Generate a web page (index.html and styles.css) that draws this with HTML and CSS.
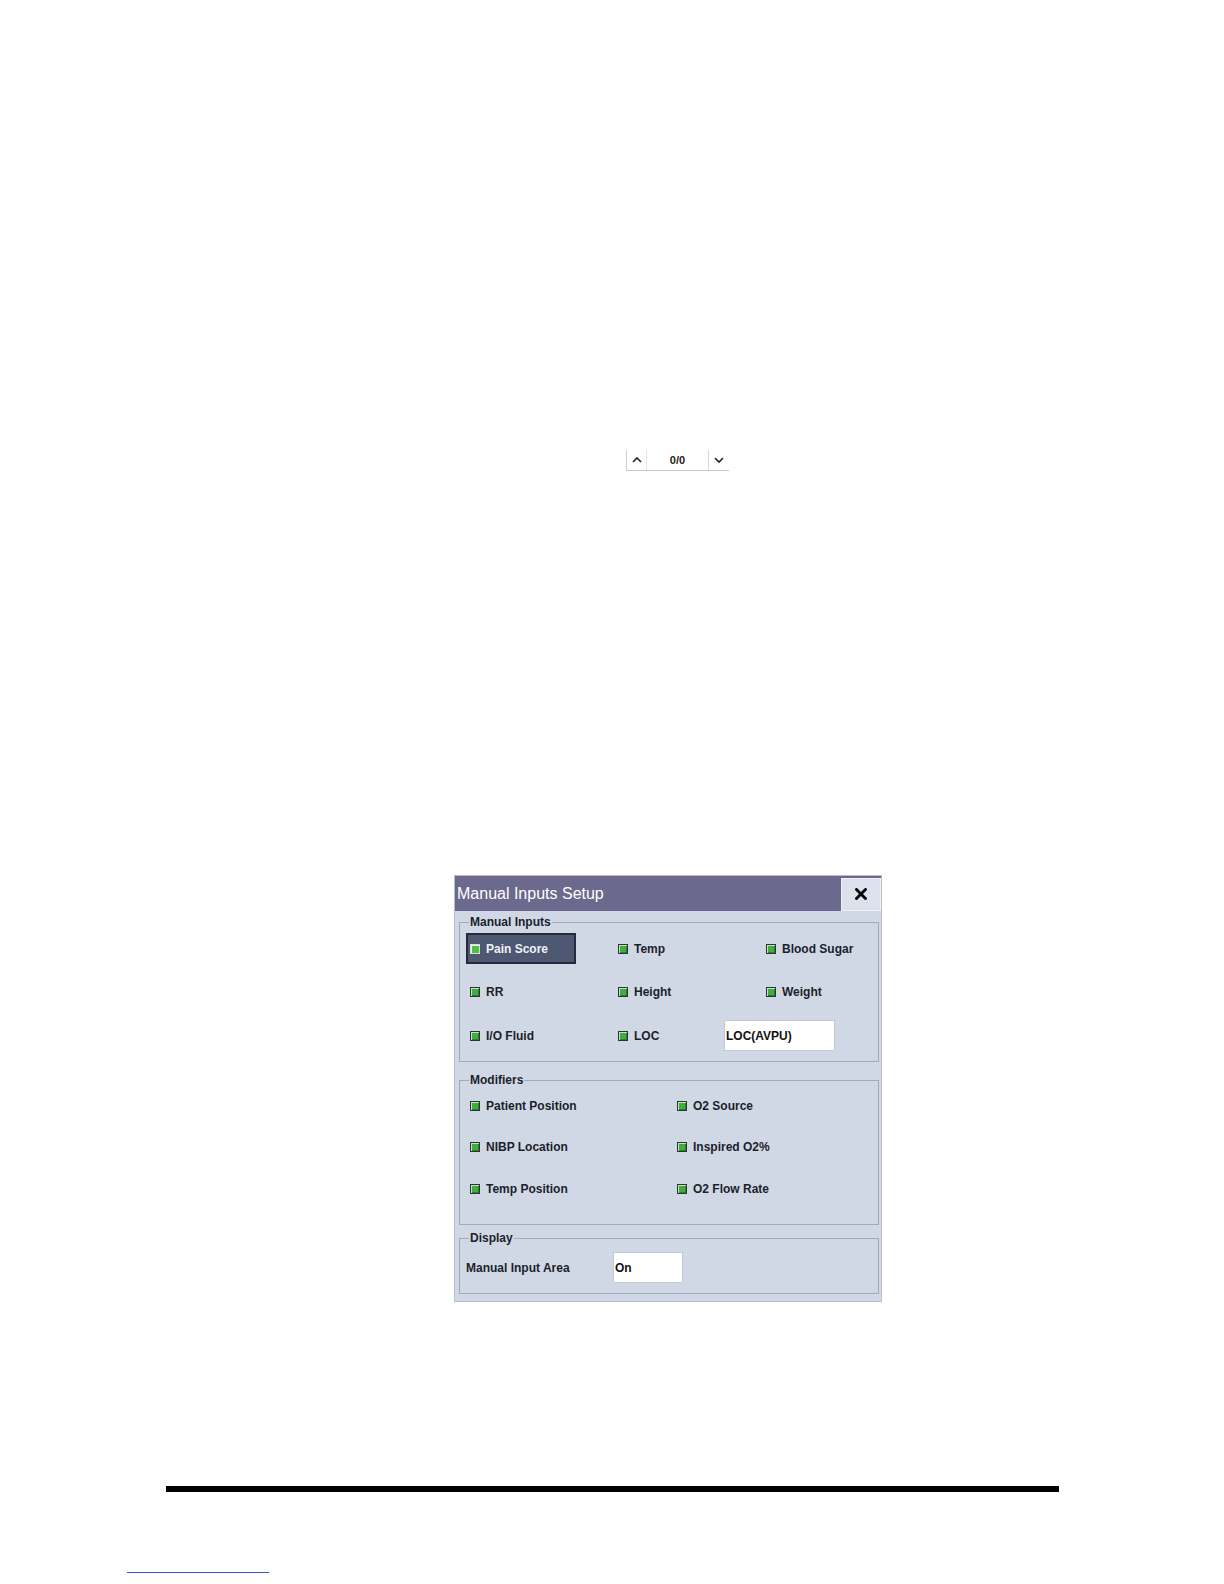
FILE: index.html
```html
<!DOCTYPE html>
<html>
<head>
<meta charset="utf-8">
<link rel="stylesheet" href="styles.css">
</head>
<body>
<div class="page">
  <div class="spinner">
    <div class="spin-btn spin-up">
      <svg width="12" height="8" viewBox="0 0 12 8"><path d="M2 6 L6 2 L10 6" fill="none" stroke="#222" stroke-width="1.6"/></svg>
    </div>
    <div class="spin-value">0/0</div>
    <div class="spin-btn spin-down">
      <svg width="12" height="8" viewBox="0 0 12 8"><path d="M2 2 L6 6 L10 2" fill="none" stroke="#222" stroke-width="1.6"/></svg>
    </div>
  </div>

  <div class="dialog">
    <div class="titlebar">
      <div class="title">Manual Inputs Setup</div>
      <div class="close">
        <svg width="12" height="12" viewBox="0 0 12 12"><path d="M1.5 1.5 L10.5 10.5 M10.5 1.5 L1.5 10.5" stroke="#000" stroke-width="2.8" stroke-linecap="square"/></svg>
      </div>
    </div>
    <div class="dialog-body">
      <fieldset class="group group-inputs">
        <legend>Manual Inputs</legend>
        <div class="grid3">
          <div class="item selected"><span class="cb"></span><span>Pain Score</span></div>
          <div class="item"><span class="cb"></span><span>Temp</span></div>
          <div class="item"><span class="cb"></span><span>Blood Sugar</span></div>
          <div class="item"><span class="cb"></span><span>RR</span></div>
          <div class="item"><span class="cb"></span><span>Height</span></div>
          <div class="item"><span class="cb"></span><span>Weight</span></div>
          <div class="item"><span class="cb"></span><span>I/O Fluid</span></div>
          <div class="span2">
            <div class="item loc"><span class="cb"></span><span>LOC</span></div>
            <div class="field field-loc">LOC(AVPU)</div>
          </div>
        </div>
      </fieldset>

      <fieldset class="group group-mods">
        <legend>Modifiers</legend>
        <div class="grid2">
          <div class="item"><span class="cb"></span><span>Patient Position</span></div>
          <div class="item"><span class="cb"></span><span>O2 Source</span></div>
          <div class="item"><span class="cb"></span><span>NIBP Location</span></div>
          <div class="item"><span class="cb"></span><span>Inspired O2%</span></div>
          <div class="item"><span class="cb"></span><span>Temp Position</span></div>
          <div class="item"><span class="cb"></span><span>O2 Flow Rate</span></div>
        </div>
      </fieldset>

      <fieldset class="group group-display">
        <legend>Display</legend>
        <div class="display-row">
          <div class="display-label">Manual Input Area</div>
          <div class="field field-on">On</div>
        </div>
      </fieldset>
    </div>
  </div>

  <div class="rule"></div>
  <div class="footer-line"></div>
</div>
</body>
</html>
```

FILE: styles.css
```css
html, body {
  margin: 0;
  padding: 0;
  background: #ffffff;
}

.page {
  width: 1224px;
  height: 1584px;
  overflow: hidden;
  font-family: "Liberation Sans", Arial, sans-serif;
}

/* spinner */
.spinner {
  margin: 450px 0 0 626px;
  width: 103px;
  height: 21px;
  display: flex;
  box-sizing: border-box;
  border-bottom: 1px solid #c9c9c9;
}

.spin-btn {
  width: 21px;
  height: 20px;
  display: flex;
  align-items: center;
  justify-content: center;
  box-sizing: border-box;
}

.spin-up {
  border-left: 1px solid #cfcfcf;
  border-right: 1px solid #e4e4e4;
}

.spin-down {
  border-left: 1px solid #d6d6d6;
}

.spin-value {
  flex: 1;
  text-align: center;
  font-size: 11px;
  font-weight: bold;
  line-height: 20px;
  color: #222;
}

/* dialog */
.dialog {
  margin: 404px 0 0 454px;
  width: 428px;
  height: 427px;
  box-sizing: border-box;
  border: 1px solid #b9bdc8;
  background: #d1d8e5;
  display: flex;
  flex-direction: column;
}

.titlebar {
  height: 35px;
  flex: none;
  background: #6b698d;
  display: flex;
  align-items: center;
  justify-content: space-between;
}

.title {
  color: #ffffff;
  font-size: 16px;
  padding-left: 2px;
}

.close {
  width: 40px;
  height: 33px;
  margin-top: 1px;
  background: #dde1eb;
  box-sizing: border-box;
  border: 1px solid #eef0f5;
  display: flex;
  align-items: center;
  justify-content: center;
}

.dialog-body {
  padding: 4px 2px 0 4px;
}

.group {
  margin: 0;
  padding: 0 0 0 6px;
  border: 1px solid #a2a9b8;
  min-width: 0;
  box-sizing: border-box;
}

.group legend {
  margin-left: 3px;
  padding: 0 1px;
  font-size: 12px;
  font-weight: bold;
  line-height: 14px;
  color: #1b1f2b;
}

.group-inputs {
  height: 147px;
}

.group-mods {
  margin-top: 11px;
  height: 152px;
}

.group-display {
  margin-top: 6px;
  height: 63px;
  padding-top: 7px;
}

.grid3 {
  margin-top: -2px;
  display: grid;
  grid-template-columns: 148px 148px 148px;
  grid-template-rows: 43.5px 43.5px 43.5px;
  align-items: center;
}

.grid2 {
  margin-top: -2px;
  display: grid;
  grid-template-columns: 207px 207px;
  grid-template-rows: 41.5px 41.5px 41.5px;
  align-items: center;
}

.span2 {
  grid-column: span 2;
  display: flex;
  align-items: center;
}

.item {
  display: flex;
  align-items: center;
  height: 31px;
  box-sizing: border-box;
  border: 2px solid transparent;
  padding-left: 2px;
  font-size: 12px;
  font-weight: bold;
  color: #1b1f2b;
  white-space: nowrap;
}

.item.selected {
  width: 110px;
  background: #4e5873;
  border-color: #252b3a;
  color: #eef1f7;
}

.item.loc {
  width: 110px;
}

.cb {
  width: 10px;
  height: 10px;
  box-sizing: border-box;
  margin-right: 6px;
  border: 1px solid #2f3336;
  background: #3fae3c;
  box-shadow: inset 1px 1px 0 #bfe6b5, inset -1px -1px 0 #2f7d2c;
  flex: none;
}

.item.selected .cb {
  border-color: #d8dbe2;
  background: #4cc040;
  box-shadow: inset 1px 1px 0 #e6f7df;
}

.field {
  height: 31px;
  box-sizing: border-box;
  background: #ffffff;
  border: 1px solid #c3c9d4;
  font-size: 12px;
  font-weight: bold;
  color: #111;
  display: flex;
  align-items: center;
  padding-left: 1px;
}

.field-loc {
  width: 111px;
}

.display-row {
  display: flex;
  align-items: center;
}

.display-label {
  width: 147px;
  font-size: 12px;
  font-weight: bold;
  color: #1b1f2b;
  white-space: nowrap;
}

.field-on {
  width: 70px;
}

.rule {
  margin: 184px 0 0 166px;
  width: 893px;
  height: 6px;
  background: #000000;
}

.footer-line {
  margin: 80px 0 0 127px;
  width: 142px;
  height: 1px;
  background: #3a52d0;
}
```
